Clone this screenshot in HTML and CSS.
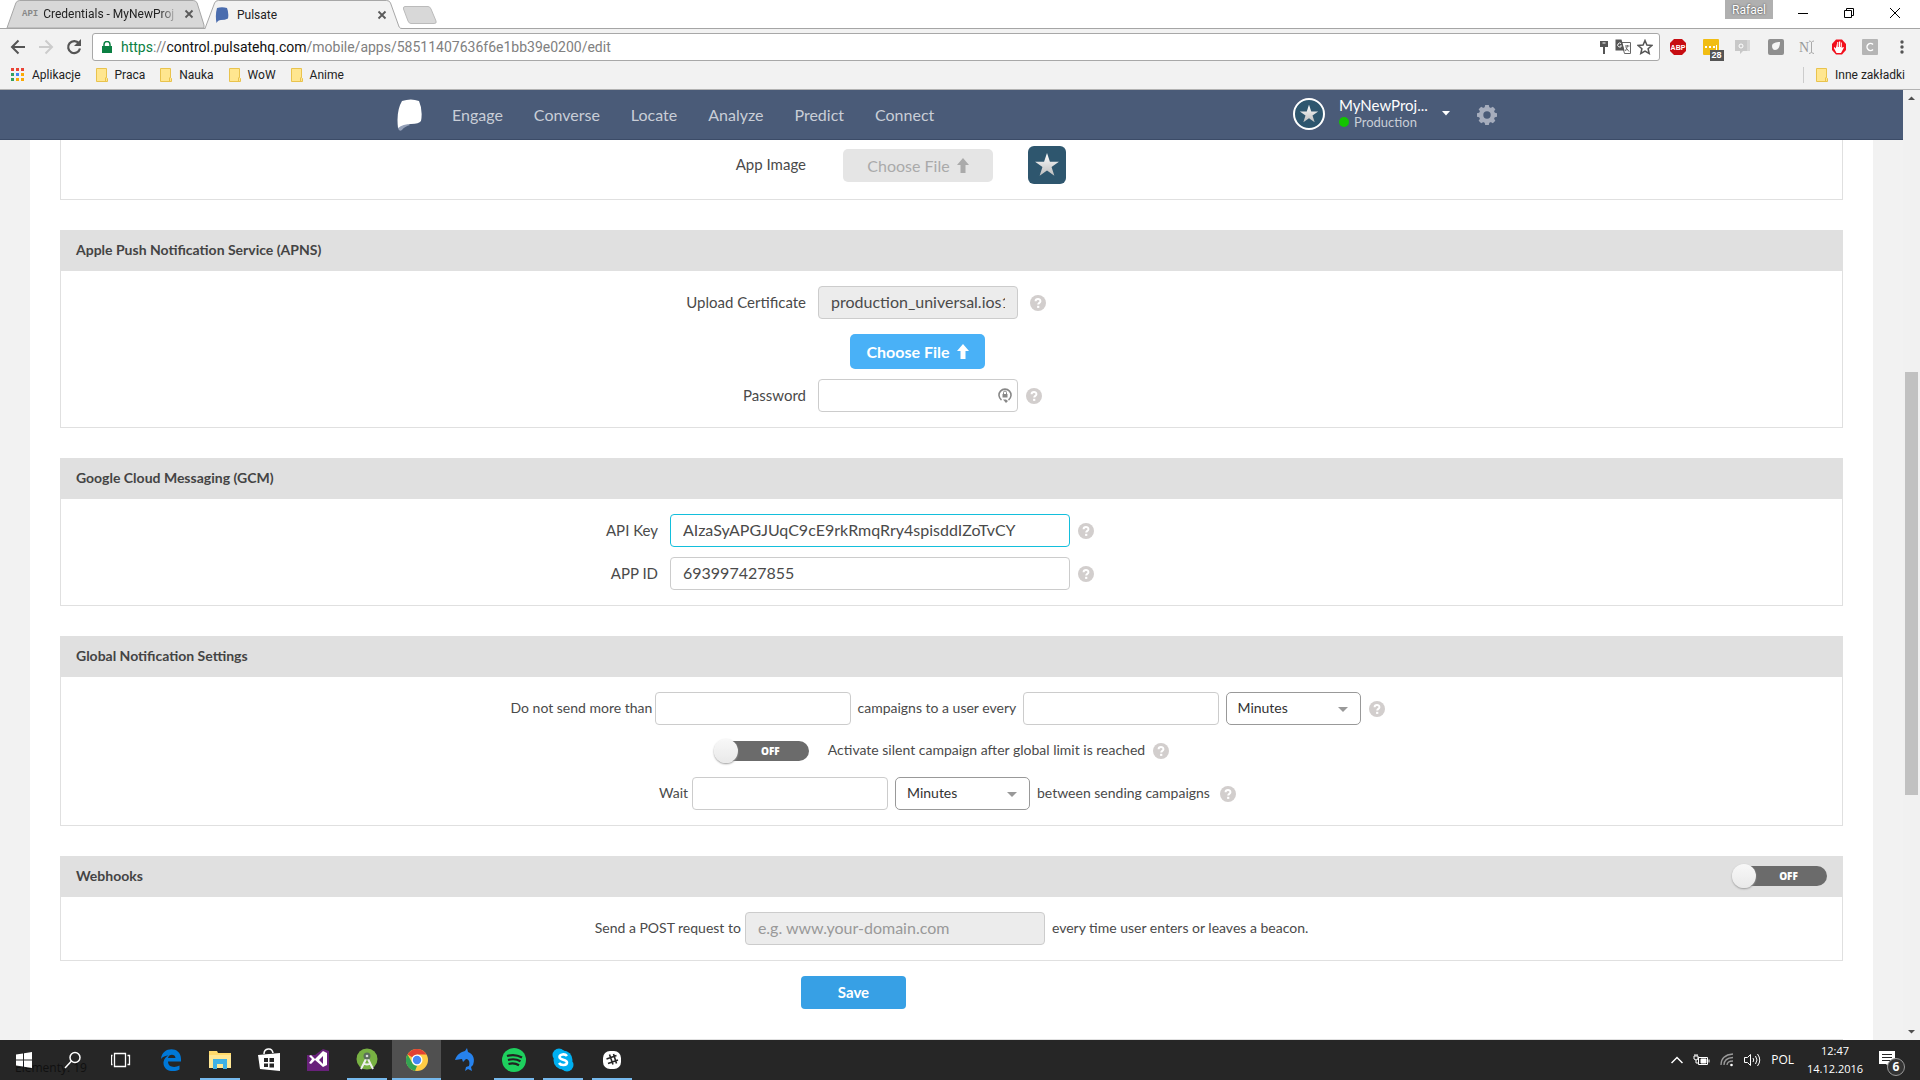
FILE: index.html
```html
<!DOCTYPE html>
<html lang="pl">
<head>
<meta charset="utf-8">
<title>Pulsate</title>
<link rel="stylesheet" href="styles.css">
</head>
<body>
<svg class="defs" width="0" height="0" aria-hidden="true">
  <defs>
    <linearGradient id="silver" x1="0" y1="0" x2="0" y2="1"><stop offset="0" stop-color="#fff"/><stop offset="1" stop-color="#bdbdbd"/></linearGradient>
    <symbol id="star" viewBox="0 0 24 24"><path fill="url(#silver)" d="M12 1l2.700 8H23l-6.800 4.900 2.600 8.100L12 17l-6.800 5 2.600-8.100L1 9h8.300z"/></symbol>
    <symbol id="folder" viewBox="0 0 12 14"><path d="M.5.5h10v9l1 1v3H.5z" fill="#ffe68f" stroke="#e9c34d"/><path d="M9.500 13V10l1-1" fill="none" stroke="#e9c34d"/></symbol>
    <symbol id="up" viewBox="0 0 12 15"><path d="M6 0l6 7H8.500v8h-5V7H0z" fill="currentColor"/></symbol>
    <symbol id="close" viewBox="0 0 10 10"><path d="M1.500 1.500l7 7m0-7l-7 7" stroke="#5a5a5a" stroke-width="1.800"/></symbol>
    <symbol id="help" viewBox="0 0 16 16"><circle cx="8" cy="8" r="8" fill="#d2cecd"/><path d="M5.600 6.300C5.600 3.300 10.400 3.300 10.400 6.200 10.400 8 8.200 7.800 8.200 9.600" fill="none" stroke="#fff" stroke-width="2"/><rect x="7.100" y="10.800" width="2.200" height="2.100" fill="#fff"/></symbol>
  </defs>
</svg>

<header class="chrome">
  <div class="tabstrip">
    <div class="tab tab-back">
      <svg class="tab-shape" viewBox="0 0 202 28" preserveAspectRatio="none"><path d="M1 28L10 3Q11 .5 14 .5H190Q193 .5 194 3L201 25V28z" fill="#d8d8d8" stroke="#a5a5a5"/></svg>
      <span class="tab-api">API</span>
      <span class="tab-title fade">Credentials - MyNewProj</span>
      <button class="bare" aria-label="Close tab"><svg width="10" height="10"><use href="#close"/></svg></button>
    </div>
    <div class="tab tab-front">
      <svg class="tab-shape" viewBox="0 0 206 29" preserveAspectRatio="none"><path d="M0 28.500L10 3Q11 .5 14 .5H190Q193 .5 194 3L203 27Q204 28.500 206 28.500V30H0z" fill="#f2f2f2" stroke="#a5a5a5"/></svg>
      <svg width="14" height="16" viewBox="0 0 14 16"><path d="M2 1Q7-.5 12 1 14 6 13 11.500 10 13 6 13 3 13 1.500 16 0 8 2 1z" fill="#4a6cae"/></svg>
      <span class="tab-title">Pulsate</span>
      <button class="bare" aria-label="Close tab"><svg width="10" height="10"><use href="#close"/></svg></button>
    </div>
    <button class="bare new-tab" aria-label="New tab"><svg width="36" height="18" viewBox="0 0 36 18"><path d="M3 .5H26Q28 .5 29 3L34 15Q35 17.500 32 17.500H9Q7 17.500 6 15L1.500 3Q1 .5 3 .5z" fill="#d8d8d8" stroke="#bbb"/></svg></button>
    <div class="window-tools">
      <button class="profile">Rafael</button>
      <button class="bare win" aria-label="Minimize"><svg width="12" height="12"><path d="M1 6.500h10" stroke="#000"/></svg></button>
      <button class="bare win" aria-label="Restore"><svg width="12" height="12" fill="none" stroke="#000"><path d="M1.500 3.500h7v7h-7zM3.500 3.500v-2h7v7h-2"/></svg></button>
      <button class="bare win" aria-label="Close"><svg width="12" height="12" fill="none" stroke="#000"><path d="M1 1l10 10M11 1L1 11"/></svg></button>
    </div>
  </div>
  <div class="toolbar">
    <button class="bare" aria-label="Back"><svg width="16" height="16" fill="none" stroke="#555" stroke-width="2"><path d="M15 8H2M8.500 1.500L2 8l6.500 6.500"/></svg></button>
    <button class="bare" aria-label="Forward"><svg width="16" height="16" fill="none" stroke="#ccc" stroke-width="2"><path d="M1 8h13M7.500 1.500L14 8l-6.500 6.500"/></svg></button>
    <button class="bare" aria-label="Reload"><svg width="16" height="16"><path d="M13 4.500A6 6 0 1 0 14 9.500" fill="none" stroke="#555" stroke-width="2.200"/><path d="M15 0v7H8z" fill="#555"/></svg></button>
    <div class="omnibox">
      <svg width="10" height="12" viewBox="0 0 10 12"><path d="M0 5h10v7H0z" fill="#0b8043"/><path d="M2 5.500V3.500a3 3 0 0 1 6 0v2" fill="none" stroke="#0b8043" stroke-width="1.500"/></svg>
      <span class="url"><span class="secure">https</span>://<span class="host">control.pulsatehq.com</span>/mobile/apps/58511407636f6e1bb39e0200/edit</span>
      <svg width="10" height="14" viewBox="0 0 10 14" fill="#555"><path d="M1 1h8v6H6v7H4V7H1z"/><path d="M3.500 2.500h3v1h-3z" fill="#fff"/></svg>
      <svg width="16" height="16" viewBox="0 0 16 16"><path d="M6.500 3.500h9v11h-6z" fill="#fff" stroke="#666"/><path d="M.5.5h6l3 11h-9z" fill="#555"/><path d="M6 4.500a2 2 0 1 0 .5 2.500H5" fill="none" stroke="#fff"/><path d="M10 7h4.500M12.300 6v1.500L10.500 12M10.800 8.500l3.200 4" stroke="#666" fill="none"/></svg>
      <svg width="16" height="16" viewBox="0 0 16 16"><path d="M8 1.500l1.900 4.600 4.900.4-3.700 3.200 1.100 4.800L8 12l-4.200 2.500 1.100-4.800L1.200 6.500l4.900-.4z" fill="none" stroke="#555" stroke-width="1.500"/></svg>
    </div>
    <div class="extensions">
      <svg width="18" height="18" viewBox="0 0 18 18"><path d="M5 1h8l4 4v8l-4 4H5l-4-4V5z" fill="#c70d12"/><text x="9" y="12" text-anchor="middle" class="abp">ABP</text></svg>
      <span class="ext-count"><svg width="16" height="16"><rect width="16" height="16" rx="1" fill="#f1bd13"/><path d="M2 7h2v2H2zm4 0h2v2H6zm4 0h2v2h-2zm3-1h1v5h-1z" fill="#fff"/></svg><b>28</b></span>
      <svg width="18" height="16"><path d="M12 1h4v11h-3z" fill="#d6d6d6"/><path d="M1 1h12v11H9l-3 3v-3H1z" fill="#c8c8c8"/><circle cx="7" cy="7" r="2" fill="none" stroke="#fff"/></svg>
      <svg width="16" height="16"><rect width="16" height="16" rx="2" fill="#8f8f8f"/><path d="M4 7c0-3 4-4 8-4 0 5-2 8-5 8-2 0-3-2-3-4z" fill="#f5f5f5"/></svg>
      <svg width="16" height="16"><text x="0" y="13" class="ext-n">N</text><path d="M10 2q2 0 2.500 1.500Q13 2 15 2M12.500 3v10M10 14.500q2 0 2.500-1.500 .5 1.500 2.500 1.500" stroke="#aaa" fill="none"/></svg>
      <svg width="16" height="18" viewBox="0 0 16 18"><path d="M5 1.500h6l4 4.500v6l-4 4.500H5L1 12V6z" fill="#f20f1c"/><path d="M5 5.500v5L3.500 9 2.800 10l2.700 5h4.500l3-5.500-1-.5-1.200 1V4.500H10V9H9.300V3.500H8V9H7.300V4H6.200V9H5.800z" fill="#fff"/></svg>
      <svg width="16" height="16"><rect width="16" height="16" rx="1" fill="#b5b5b5"/><path d="M11 5.500A3.500 3.500 0 1 0 11 10.500" stroke="#fff" stroke-width="1.500" fill="none"/></svg>
      <svg width="16" height="16" fill="#555"><circle cx="8" cy="3" r="1.700"/><circle cx="8" cy="8" r="1.700"/><circle cx="8" cy="13" r="1.700"/></svg>
    </div>
  </div>
  <nav class="bookmarks">
    <a href="#"><svg width="14" height="14"><g fill="#ea4335"><path d="M0 0h3v3H0zM5 0h3v3H5zM10 0h3v3h-3z"/></g><path d="M0 5h3v3H0zM0 10h3v3H0z" fill="#34a05f"/><path d="M5 5h3v3H5z" fill="#4285f4"/><path d="M10 5h3v3h-3zM10 10h3v3h-3zM5 10h3v3H5z" fill="#fbaa05"/></svg>Aplikacje</a>
    <a href="#"><svg width="12" height="14"><use href="#folder"/></svg>Praca</a>
    <a href="#"><svg width="12" height="14"><use href="#folder"/></svg>Nauka</a>
    <a href="#"><svg width="12" height="14"><use href="#folder"/></svg>WoW</a>
    <a href="#"><svg width="12" height="14"><use href="#folder"/></svg>Anime</a>
    <a href="#" class="other"><svg width="12" height="14"><use href="#folder"/></svg>Inne zakładki</a>
  </nav>
</header>

<div class="viewport">
  <div class="page">
    <header class="navbar">
      <a href="#" class="logo" aria-label="Pulsate"><svg width="26" height="32" viewBox="0 0 26 32"><path d="M1 25Q10 22 13 26 7 28 5 31 2 33 1 29z" fill="#94a0b8"/><path d="M5 2Q14-1 22 2 26 11 24 22 22 25 14 25 6 25 1 29-1 12 5 2z" fill="#fff"/></svg></a>
      <nav class="menu">
        <a href="#">Engage</a><a href="#">Converse</a><a href="#">Locate</a><a href="#">Analyze</a><a href="#">Predict</a><a href="#">Connect</a>
      </nav>
      <button class="bare account">
        <span class="avatar"><svg width="20" height="20"><use href="#star"/></svg></span>
        <span class="account-text"><span class="account-name">MyNewProj...</span><span class="account-env"><i></i>Production</span></span>
        <svg width="8" height="5"><path d="M0 0h8L4 4.500z" fill="#fff"/></svg>
      </button>
      <button class="bare" aria-label="Settings"><svg width="20" height="20" viewBox="-10 -10 20 20"><g fill="#a6adbd"><path id="tooth" d="M-2.500-7L-1.800-10H1.800L2.500-7V7L1.800 10H-1.800L-2.500 7z"/><use href="#tooth" transform="rotate(45)"/><use href="#tooth" transform="rotate(90)"/><use href="#tooth" transform="rotate(135)"/><circle r="8"/></g><circle r="3.700" fill="#4a5b78"/></svg></button>
    </header>

    <main class="sheet">
      <section class="panel">
        <div class="panel-body first">
          <div class="row split">
            <span class="label">App Image</span>
            <button class="upload muted" disabled>Choose File <svg width="12" height="15"><use href="#up"/></svg></button>
            <span class="app-tile"><svg width="26" height="26"><use href="#star"/></svg></span>
          </div>
        </div>
      </section>

      <section class="panel">
        <h2>Apple Push Notification Service (APNS)</h2>
        <div class="panel-body">
          <div class="row split">
            <label class="label" for="cert">Upload Certificate</label>
            <input id="cert" class="field w200" value="production_universal.ios12" disabled>
            <svg class="help far" width="16" height="16"><use href="#help"/></svg>
          </div>
          <div class="row choose"><button class="upload">Choose File <svg width="12" height="15"><use href="#up"/></svg></button></div>
          <div class="row split">
            <label class="label" for="pass">Password</label>
            <span class="pass-wrap"><input id="pass" type="password" class="field w200"><svg width="14" height="16" viewBox="0 0 14 16"><path d="M3.500 13A6 6 0 1 1 10.500 13" fill="none" stroke="#888" stroke-width="1.600"/><path d="M4.500 7h5v3.500h-5z" fill="#888"/><path d="M5.500 7V5.500a1.500 1.500 0 0 1 3 0V7" fill="none" stroke="#888"/><path d="M5 12.500h3l2 1.500-2 2z" fill="#888"/></svg></span>
            <svg class="help" width="16" height="16"><use href="#help"/></svg>
          </div>
        </div>
      </section>

      <section class="panel">
        <h2>Google Cloud Messaging (GCM)</h2>
        <div class="panel-body">
          <div class="row third">
            <label class="label" for="key">API Key</label>
            <input id="key" class="field w400 active" value="AIzaSyAPGJUqC9cE9rkRmqRry4spisddIZoTvCY">
            <svg class="help" width="16" height="16"><use href="#help"/></svg>
          </div>
          <div class="row third">
            <label class="label" for="appid">APP ID</label>
            <input id="appid" class="field w400" value="693997427855">
            <svg class="help" width="16" height="16"><use href="#help"/></svg>
          </div>
        </div>
      </section>

      <section class="panel">
        <h2>Global Notification Settings</h2>
        <div class="panel-body">
          <div class="row center">
            <label class="text t-max" for="max">Do not send more than</label>
            <input id="max" class="field w196">
            <label class="text after t-every" for="every">campaigns to a user every</label>
            <input id="every" class="field w196">
            <span class="select"><select aria-label="Limit unit"><option>Minutes</option></select></span>
            <svg class="help near" width="16" height="16"><use href="#help"/></svg>
          </div>
          <div class="row center silent">
            <label class="toggle"><input type="checkbox" aria-label="Silent campaign"><span>OFF</span></label>
            <span class="text">Activate silent campaign after global limit is reached</span>
            <svg class="help near" width="16" height="16"><use href="#help"/></svg>
          </div>
          <div class="row center">
            <label class="text" for="wait">Wait</label>
            <input id="wait" class="field w196">
            <span class="select"><select aria-label="Wait unit"><option>Minutes</option></select></span>
            <span class="text after t-between">between sending campaigns</span>
            <svg class="help near" width="16" height="16"><use href="#help"/></svg>
          </div>
        </div>
      </section>

      <section class="panel">
        <h2>Webhooks <label class="toggle"><input type="checkbox" aria-label="Webhooks"><span>OFF</span></label></h2>
        <div class="panel-body">
          <div class="row center hook">
            <label class="text" for="hook">Send a POST request to</label>
            <input id="hook" class="field w300" placeholder="e.g. www.your-domain.com" disabled>
            <span class="text after">every time user enters or leaves a beacon.</span>
          </div>
        </div>
      </section>

      <div class="actions"><button class="save">Save</button></div>
      <hr>
    </main>
  </div>
  <div class="scrollbar">
    <svg width="17" height="17"><path d="M5 10h7L8.500 6.500z" fill="#505050"/></svg>
    <div class="track"><div class="thumb"></div></div>
    <svg width="17" height="17"><path d="M5 7h7l-3.500 3.500z" fill="#505050"/></svg>
  </div>
</div>

<footer class="taskbar">
  <span class="status">Elementy: 19</span>
  <button class="bare task" aria-label="Start"><svg width="16" height="16" fill="#fff"><path d="M0 2.500L7 1.500V7.500H0zM8 1.300L16 0V7.500H8zM0 8.500H7V14.500L0 13.500zM8 8.500H16V16L8 14.700z"/></svg></button>
  <button class="bare task" aria-label="Search"><svg width="18" height="18" fill="none" stroke="#fff" stroke-width="1.500"><circle cx="11" cy="6.500" r="5"/><path d="M7.500 10L1 17"/></svg></button>
  <button class="bare task" aria-label="Task view"><svg width="22" height="16" viewBox="1 0 22 16" fill="none" stroke="#fff"><path d="M4.500 1.500h11v13h-11zM2.500 3.500h-1v9h1M17.500 3.500h2v9h-2" stroke-width="1.300"/></svg></button>
  <button class="bare task" aria-label="Edge"><svg width="20" height="22" viewBox="0 0 20 22"><path d="M0 10C1-3 20-3 20 10v2.500H7c0 6 7 6.500 11.500 4v4C11 24.500 2 21 2.500 13 3 10 5 7.500 7.500 6.500 4.500 6.500 1.500 8 0 10zM7 9h7.500C14.500 4.500 7.500 4.500 7 9z" fill="#0078d7"/></svg></button>
  <button class="bare task open" aria-label="Explorer"><svg width="22" height="20"><path d="M0 1h8l1 2h13v15H0z" fill="#ffd96b"/><path d="M0 5h22v13H0z" fill="#ffe794"/><path d="M4 19V9h14v10h-4v-5H8v5z" fill="#3fb1e5"/></svg></button>
  <button class="bare task" aria-label="Store"><svg width="22" height="24"><path d="M0 7l22-2v18L2 21z" fill="#fff"/><path d="M6 6C6 0 14-1 15 5" fill="none" stroke="#fff" stroke-width="1.500"/><path d="M6 10h4v4H6zm5.500 0H16v4h-4.500zM6 15.500h4V19H6zm5.500 0H16v4h-4.500z" fill="#262626"/></svg></button>
  <button class="bare task" aria-label="Visual Studio"><svg width="22" height="22"><path d="M0 22V6h8l8-6 6 2v20z" fill="#68217a"/><path d="M2 7l2-1 4 4 8-8 4 2v12l-4 2-8-7-4 4-2-1 3-4zM16 7l-4 4 4 4z" fill="#fff" fill-rule="evenodd"/></svg></button>
  <button class="bare task open" aria-label="Android Studio"><svg width="22" height="24"><circle cx="11" cy="11" r="10.500" fill="#78b143"/><path d="M11 9L5 21M11 9l6 12M7 15q4 3 8 0" stroke="#eee" stroke-width="2" fill="none"/><circle cx="11" cy="8" r="3.500" fill="#5b6e5b"/><circle cx="11" cy="8" r="1.300" fill="#ddd"/></svg></button>
  <button class="bare task open current" aria-label="Chrome"><svg width="22" height="22" viewBox="0 0 22 22"><circle cx="11" cy="11" r="11" fill="#fc4"/><path d="M11 11L1.500 5.500A11 11 0 0 1 20.500 5.500H11z" fill="#e34133"/><path d="M1.500 5.500L7 15l4 2-2 5A11 11 0 0 1 1.500 5.500z" fill="#34a353"/><circle cx="11" cy="11" r="5.500" fill="#fff"/><circle cx="11" cy="11" r="4.200" fill="#4687f4"/></svg></button>
  <button class="bare task" aria-label="Dolphin"><svg width="22" height="24"><path d="M1 12C3 6 7 4 11 3l2-3 1 4c6 2 7 8 5 13l-2 2 1 4-4-2-3 2 1-4 3-1c1-4 0-7-3-7l-3 3-1-3c-3 0-4 1-7 1z" fill="#2682ee"/></svg></button>
  <button class="bare task open" aria-label="Spotify"><svg width="24" height="24"><circle cx="12" cy="12" r="12" fill="#1ed05e"/><path d="M5 8q8-2.500 15 1.500M6 12q7-2 12.500 1.300M6.500 16q6-1.500 10.500 1.300" fill="none" stroke="#222" stroke-width="2.200"/></svg></button>
  <button class="bare task open" aria-label="Skype"><svg width="22" height="24"><circle cx="7" cy="7" r="6.500" fill="#00aff0"/><circle cx="15" cy="17" r="6.500" fill="#00aff0"/><circle cx="11" cy="12" r="9.500" fill="#00aff0"/><path d="M15 8C13 5.500 7.500 6 7.500 9c0 3.500 7.500 2 7.500 5.500 0 3-6 3.500-8 .5" fill="none" stroke="#fff" stroke-width="2.600"/></svg></button>
  <button class="bare task open" aria-label="Slack"><svg width="20" height="20"><rect x="1" y="1" width="18" height="18" rx="7" fill="#fff"/><path d="M7.500 4.500l3.500 10M11.500 4l3 9.500M4.500 9l10-3.500M6 13.500L16 10" stroke="#262626" stroke-width="1.600"/></svg></button>
  <div class="tray">
    <svg width="12" height="12" fill="none" stroke="#fff" stroke-width="1.500"><path d="M.5 9L6 3.500 11.500 9"/></svg>
    <svg width="17" height="12" fill="none" stroke="#fff"><path d="M5.500 3.500h9v7h-9zM16 5.500v3M1 2h4v3l-2 1-2-1zM2 0v2M4 0v2M3 6v3h2"/><path d="M8 5h5v4H8z" fill="#fff"/></svg>
    <svg width="14" height="14" fill="none" stroke="#999" stroke-width="1.300"><path d="M1 12Q1 2 13 1M4 12Q4 5 13 4.500M7 12q0-4 6-4"/><circle cx="11.500" cy="12" r="1.300" fill="#fff" stroke="none"/></svg>
    <svg width="17" height="14" fill="none" stroke="#fff"><path d="M.5 4.500h3l3-3v11l-3-3h-3zM9 5q1.500 2 0 4M11.500 3q3 4 0 8M13.500 1q4.500 6 0 12"/></svg>
    <span>POL</span>
    <span class="clock">12:47<br>14.12.2016</span>
    <span class="notes"><svg width="17" height="18"><path d="M0 0h16v13h-5v4l-4-4H0z" fill="#fff"/><path d="M3 3.500h10M3 6.500h10M3 9.500h10" stroke="#262626"/></svg><b>6</b></span>
  </div>
</footer>
</body>
</html>
```
FILE: styles.css
```css
* { box-sizing: border-box; }
body {
  margin: 0;
  height: 100vh;
  display: flex;
  flex-direction: column;
  overflow: hidden;
  background: #f2f2f2;
  font-family: Lato, sans-serif;
  color: #4a4a4a;
}
svg { display: block; flex: none; }
.defs { position: absolute; }
.bare { border: 0; padding: 0; background: none; font: inherit; color: inherit; display: flex; align-items: center; }
a { color: inherit; text-decoration: none; }

/* browser window */
.chrome { flex: none; height: 90px; border-bottom: 1px solid #b3b3b3; font: 12px/16px Roboto, sans-serif; color: #222; }
.tabstrip { display: flex; height: 29px; padding-left: 6px; background: #fff; border-bottom: 1px solid #a5a5a5; }
.tab { position: relative; display: flex; align-items: center; flex: none; height: 29px; }
.tab > * { position: relative; }
.tab .tab-shape { position: absolute; left: 0; top: 0; width: 100%; height: 100%; }
.tab-back { width: 199px; height: 28px; padding: 0 11px 0 16px; gap: 5px; }
.tab-front { width: 197px; padding: 0 15px 0 10px; gap: 8px; }
.tab-title { flex: 1; white-space: nowrap; }
.fade { -webkit-mask-image: linear-gradient(90deg, #000 85%, transparent); mask-image: linear-gradient(90deg, #000 85%, transparent); }
.tab-api { font: bold 9px "Liberation Mono", monospace; color: #888; }
.new-tab { height: 29px; padding-bottom: 0; }
.window-tools { margin-left: auto; display: flex; padding-right: 2px; }
.profile { border: 0; width: 48px; height: 19px; margin-right: 7px; padding: 0; background: #b0b0b0; color: #fff; font: 12px/18px Roboto, sans-serif; text-shadow: 0 0 2px #333; }
.win { width: 46px; justify-content: center; height: 26px; }
.toolbar { display: flex; align-items: center; height: 36px; padding: 0 10px; gap: 12px; }
.omnibox { flex: 1; display: flex; align-items: center; gap: 6px; height: 28px; margin-left: -2px; padding: 0 6px 0 9px; border: 1px solid #a8a8a8; border-radius: 3px; background: #fff; }
.url { flex: 1; margin-left: 3px; font-size: 14px; color: #808080; white-space: nowrap; }
.secure { color: #0b8043; }
.host { color: #111; }
.extensions { display: flex; width: 241px; margin-left: -3px; justify-content: space-between; align-items: center; }
.abp { font: bold 7px "Liberation Sans", sans-serif; fill: #fff; }
.ext-n { font: 14px "Liberation Serif", serif; fill: #999; }
.ext-count { position: relative; }
.ext-count b { position: absolute; left: 7px; top: 11px; padding: 0 2px; background: #555; color: #fff; font: bold 9px/11px "Liberation Sans", sans-serif; }
.bookmarks { display: flex; align-items: center; height: 20px; padding: 0 15px 0 11px; gap: 15px; }
.bookmarks a { display: flex; align-items: center; gap: 7px; }
.bookmarks .other { margin-left: auto; padding-left: 12px; border-left: 1px solid #ccc; }

/* page */
.viewport { flex: 1; min-height: 0; display: flex; overflow: hidden; }
.page { flex: 1; min-width: 0; }
.navbar { display: flex; align-items: center; height: 50px; padding-left: 397px; background: #4a5b78; border-bottom: 1px solid #3b4b67; color: #c9ced7; }
.logo { margin-right: 29px; }
.menu { display: flex; font-size: 16px; line-height: 20px; gap: 31px; }
.account { width: 155px; gap: 14px; margin: 0 29px 2px auto; }
.navbar > :last-child { margin-right: 406px; }
.avatar { display: flex; align-items: center; justify-content: center; flex: none; width: 32px; height: 32px; border: 2px solid #fff; border-radius: 50%; background: #2e566e; }
.account-text { flex: 1; text-align: left; line-height: 17px; }
.account-name { display: block; font-size: 15px; color: #fff; }
.account-env { display: flex; align-items: center; gap: 5px; font-size: 13px; }
.account-env i { width: 10px; height: 10px; border-radius: 50%; background: #13c400; }

.sheet { margin: 0 30px; padding: 0 30px; background: #fff; min-height: 100%; }
.panel { margin-bottom: 30px; border: 1px solid #e0e0e0; border-top: 0; }
.panel h2 { display: flex; align-items: center; justify-content: space-between; height: 41px; margin: 0; padding: 0 15px 2px; background: #e0e0e0; font-size: 14px; font-weight: 700; line-height: 20px; color: #444; }
.panel-body { display: flex; flex-direction: column; gap: 10px; padding: 15px 0; font-size: 14px; line-height: 20px; }
.panel-body.first { padding-top: 6px; }
.row { display: flex; align-items: center; min-height: 32px; }
.center { justify-content: center; gap: 4px; padding-right: 8px; }
.label { text-align: right; font-size: 15px; padding: 0 12px 2px 0; }
.text { padding-bottom: 2px; white-space: nowrap; }
.t-max { width: 140px; }
.t-every { width: 161px; }
.t-between { width: 175px; }
.split .label { width: 757px; }
.third .label { width: 609px; }
.field { height: 33px; padding: 0 12px 3px; border: 1px solid #ccc; border-radius: 4px; background: #fff; color: #4a4a4a; font: 16px Lato, sans-serif; }
.field:disabled { background: #ececec; }
.field::placeholder { color: #999; }
.active { border-color: #13bfdc; outline: 0; }
.w196 { width: 196px; }
.w200 { width: 200px; }
.w300 { width: 300px; }
.w400 { width: 400px; }
.after { margin-left: 3px; }
.help { margin-left: 8px; }
.help.far { margin-left: 12px; }
.help.near { margin-left: 4px; }
.pass-wrap { position: relative; }
.pass-wrap .field { display: block; }
.pass-wrap svg { position: absolute; right: 6px; top: 8px; }
.upload { display: flex; align-items: center; justify-content: center; gap: 7px; width: 135px; height: 35px; border: 0; border-radius: 5px; background: #49b1f7; color: #fff; font: 700 16px Lato, sans-serif; }
.muted { width: 150px; height: 33px; margin: 0 35px 0 25px; background: #e5e5e5; color: #aaa; font-weight: 400; }
.choose { padding: 0 0 0 789px; margin-top: 5px; }
.app-tile { display: flex; align-items: center; justify-content: center; width: 38px; height: 38px; border-radius: 6px; background: #2e566e; }
.select { position: relative; margin-left: 3px; }
.select::after { content: ""; position: absolute; right: 13px; top: 15px; border: 5px solid transparent; border-top-color: #999; border-bottom: 0; }
select { display: block; appearance: none; width: 135px; height: 33px; padding: 0 11px 2px; border: 1px solid #999; border-radius: 5px; background: #fff; color: #333; font: 14px Lato, sans-serif; }
.toggle { position: relative; display: flex; align-items: center; justify-content: center; width: 93px; height: 20px; padding-left: 16px; border-radius: 10px; background: #6b6b6b; color: #fff; font: 800 10px/20px "Open Sans", sans-serif; }
.toggle input { appearance: none; position: absolute; left: -2px; top: -2px; width: 24px; height: 24px; margin: 0; border-radius: 50%; background: linear-gradient(#f8f8f8, #e9e9e9); box-shadow: 0 1px 2px #999; }
.silent { padding-right: 18px; }
.silent .text { margin-left: 15px; }
.hook { padding-right: 0; }
.actions { display: flex; justify-content: center; margin: -15px 196px 30px 0; }
.save { width: 105px; height: 33px; padding: 0 0 2px; border: 0; border-radius: 4px; background: #37a0e5; color: #fff; font: 700 15px Lato, sans-serif; }
hr { margin: 0; border: 0; border-top: 1px solid #e0e0e0; }

.scrollbar { display: flex; flex-direction: column; width: 17px; background: #f1f1f1; }
.track { flex: 1; padding: 265px 2px 0; }
.thumb { height: 65%; background: #c1c1c1; }

/* taskbar */
.taskbar { position: relative; flex: none; display: flex; height: 40px; background: #262626; color: #fff; font: 12px/18px "Open Sans", sans-serif; }
.status { position: absolute; left: 15px; top: 19px; color: #101010; }
.task { position: relative; width: 49px; justify-content: center; border-right: 1px solid transparent; }
.open { box-shadow: inset 0 -2px #76b9ed; background-clip: padding-box; border-left: 4px solid transparent; border-right: 5px solid transparent; }
.current { border-width: 0; background: #505050; }
.tray { margin-left: auto; display: flex; align-items: center; padding-right: 24px; gap: 10px; }
.clock { width: 56px; margin-left: 3px; text-align: center; white-space: nowrap; font-size: 11px; }
.notes { position: relative; margin-left: 6px; }
.notes b { position: absolute; left: 8px; top: 7px; width: 18px; height: 18px; border: 1px solid #999; border-radius: 50%; background: #333; text-align: center; line-height: 15px; }
```
